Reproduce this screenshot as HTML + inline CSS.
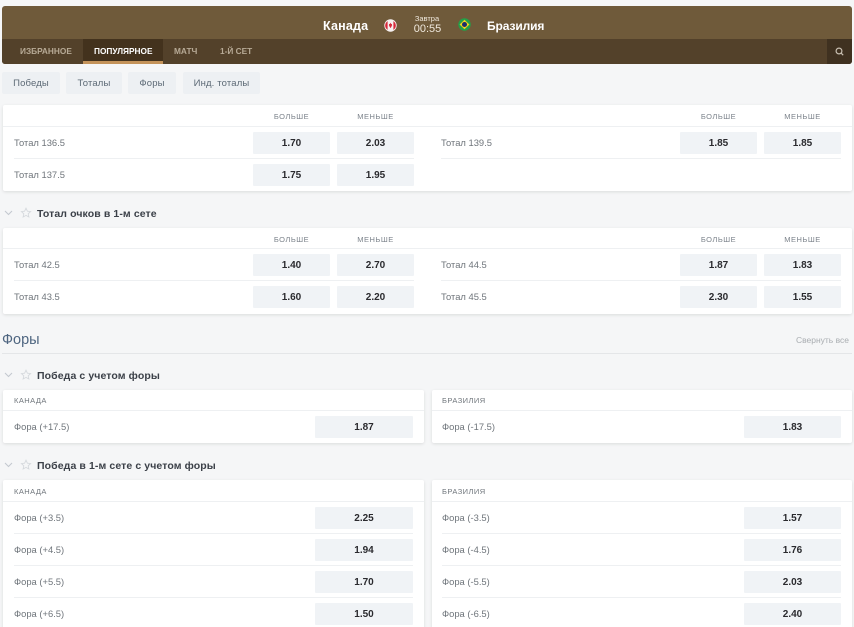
<!DOCTYPE html>
<html lang="ru"><head><meta charset="utf-8"><title>Канада — Бразилия</title>
<style>
html,body{margin:0;padding:0;background:#f5f6f7;width:854px;height:627px;overflow:hidden}
#p{width:854px;height:627px;overflow:hidden;position:relative;font-family:"Liberation Sans","DejaVu Sans",sans-serif;color:#333;background:#f5f6f7}
.a,.card,.b,.l,.h,.t,.line,.pill,.tab,.st,.sv{position:absolute}
.card{background:#fff;box-shadow:0 1px 3px rgba(0,0,0,.11);border-radius:2px}
.b{width:77px;height:22px;line-height:24px;background:#f0f3f6;text-align:center;font-size:10px;font-weight:700;color:#2a2a2e;border-radius:1px}
.w{width:98px}
.l{font-size:9.4px;color:#6f757b;line-height:14px;white-space:nowrap}
.h{font-size:7.5px;color:#7c838b;line-height:10px;margin-top:1px;letter-spacing:.5px;text-align:center;width:77px}
.hl{font-size:7.5px;color:#70767c;line-height:10px;margin-top:1px;letter-spacing:.45px;position:absolute}
.line{height:1px;background:#eef0f2}
.t{font-size:10.5px;font-weight:700;color:#3b4048;line-height:14px;margin-top:1px;letter-spacing:.1px;left:37px;white-space:nowrap}
.pill{top:72px;height:22px;line-height:23px;background:#edf0f3;color:#5d6a76;font-size:9.5px;text-align:center;border-radius:2px;letter-spacing:.15px}
.tab{top:39px;height:25px;line-height:25px;font-size:8.3px;font-weight:700;color:#b7aa96;white-space:nowrap}
.st{left:3px;width:31px;height:14px}
</style></head><body><div id="p">

<div class="a" style="left:2px;top:6px;width:850px;height:58px;border-radius:3px;overflow:hidden;background:#6f5a3a">
  <div class="a" style="left:0;top:33px;width:850px;height:25px;background:#53412a"></div>
  <div class="a" style="left:81px;top:33px;width:80px;height:25px;background:#43321d"></div>
  <div class="a" style="left:81px;top:55px;width:80px;height:3px;background:#c4935a"></div>
  <div class="a" style="left:825px;top:33px;width:25px;height:25px;background:#3f3120"></div>
</div>
<div class="a" style="left:323px;top:18px;font-size:12.5px;font-weight:700;color:#fff;line-height:16px;letter-spacing:.2px">Канада</div>
<svg class="a" style="left:384px;top:19px" width="13" height="13" viewBox="0 0 13 13"><circle cx="6.5" cy="6.5" r="6.2" fill="#f6f1f1"/><path d="M3.6 2.1A5.2 5.2 0 0 0 3.6 10.9ZM9.4 2.1A5.2 5.2 0 0 1 9.4 10.9Z" fill="#d5283a"/><path d="M6.5 3.6 7.2 5.1 8.1 4.8 7.8 6.6 8.3 6.9 7 7.9 7.1 8.8H5.9L6 7.9 4.7 6.9 5.2 6.6 4.9 4.8 5.8 5.1Z" fill="#d5283a"/></svg>
<div class="a" style="left:407px;top:14px;width:40px;text-align:center;font-size:7.5px;color:#f0e9dd;line-height:10px">Завтра</div>
<div class="a" style="left:407px;top:22px;width:41px;text-align:center;font-size:11px;color:#f0e9dd;line-height:14px">00:55</div>
<svg class="a" style="left:458px;top:18px" width="13" height="13" viewBox="0 0 13 13"><circle cx="6.5" cy="6.5" r="6.2" fill="#22a048"/><path d="M6.5 1.8 11.4 6.5 6.5 11.2 1.6 6.5Z" fill="#f2d21e"/><circle cx="6.5" cy="6.5" r="2.5" fill="#1d2f6b"/></svg>
<div class="a" style="left:487px;top:18px;font-size:12px;font-weight:700;color:#fff;line-height:16px;letter-spacing:-.1px">Бразилия</div>

<div class="tab" style="left:20px">ИЗБРАННОЕ</div>
<div class="tab" style="left:94px;color:#fff">ПОПУЛЯРНОЕ</div>
<div class="tab" style="left:174px">МАТЧ</div>
<div class="tab" style="left:220px">1-Й СЕТ</div>
<svg class="a" style="left:835px;top:47px" width="9" height="9" viewBox="0 0 9 9" fill="none" stroke="#c9c0b2" stroke-width="1.2"><circle cx="4" cy="4" r="2.9"/><path d="M6.1 6.1 8.2 8.2"/></svg>

<div class="pill" style="left:2px;width:58px">Победы</div>
<div class="pill" style="left:66px;width:56px">Тоталы</div>
<div class="pill" style="left:128px;width:48px">Форы</div>
<div class="pill" style="left:183px;width:77px">Инд. тоталы</div>

<!-- Card 1 -->
<div class="card" style="left:3px;top:105px;width:849px;height:86px"></div>
<div class="line" style="left:3px;top:126px;width:849px"></div>
<div class="h" style="left:253px;top:111px">БОЛЬШЕ</div><div class="h" style="left:337px;top:111px">МЕНЬШЕ</div>
<div class="h" style="left:680px;top:111px">БОЛЬШЕ</div><div class="h" style="left:764px;top:111px">МЕНЬШЕ</div>
<div class="l" style="left:14px;top:136px">Тотал 136.5</div>
<div class="b" style="left:253px;top:132px">1.70</div><div class="b" style="left:337px;top:132px">2.03</div>
<div class="l" style="left:441px;top:136px">Тотал 139.5</div>
<div class="b" style="left:680px;top:132px">1.85</div><div class="b" style="left:764px;top:132px">1.85</div>
<div class="line" style="left:14px;top:158px;width:400px"></div><div class="line" style="left:441px;top:158px;width:400px"></div>
<div class="l" style="left:14px;top:168px">Тотал 137.5</div>
<div class="b" style="left:253px;top:164px">1.75</div><div class="b" style="left:337px;top:164px">1.95</div>

<!-- Section 2 -->
<svg class="st" style="top:206px" viewBox="0 0 31 14" fill="none"><path d="M2 5 5.5 8.5 9 5" stroke="#c3c9cf" stroke-width="1.1"/><path d="M23 2.2 24.4 5.2 27.6 5.6 25.2 7.8 25.9 11 23 9.4 20.1 11 20.8 7.8 18.4 5.6 21.6 5.2Z" stroke="#d5d9dd" stroke-width=".9"/></svg>
<div class="t" style="top:206px">Тотал очков в 1-м сете</div>
<div class="card" style="left:3px;top:228px;width:849px;height:86px"></div>
<div class="line" style="left:3px;top:248px;width:849px"></div>
<div class="h" style="left:253px;top:234px">БОЛЬШЕ</div><div class="h" style="left:337px;top:234px">МЕНЬШЕ</div>
<div class="h" style="left:680px;top:234px">БОЛЬШЕ</div><div class="h" style="left:764px;top:234px">МЕНЬШЕ</div>
<div class="l" style="left:14px;top:258px">Тотал 42.5</div>
<div class="b" style="left:253px;top:254px">1.40</div><div class="b" style="left:337px;top:254px">2.70</div>
<div class="l" style="left:441px;top:258px">Тотал 44.5</div>
<div class="b" style="left:680px;top:254px">1.87</div><div class="b" style="left:764px;top:254px">1.83</div>
<div class="line" style="left:14px;top:280px;width:400px"></div><div class="line" style="left:441px;top:280px;width:400px"></div>
<div class="l" style="left:14px;top:290px">Тотал 43.5</div>
<div class="b" style="left:253px;top:286px">1.60</div><div class="b" style="left:337px;top:286px">2.20</div>
<div class="l" style="left:441px;top:290px">Тотал 45.5</div>
<div class="b" style="left:680px;top:286px">2.30</div><div class="b" style="left:764px;top:286px">1.55</div>

<!-- Форы -->
<div class="a" style="left:2px;top:331px;font-size:14.5px;line-height:18px;color:#4e6580">Форы</div>
<div class="a" style="right:5px;top:335px;font-size:8.5px;line-height:11px;color:#a9adb1">Свернуть все</div>
<div class="line" style="left:2px;top:353px;width:850px;background:#e4e6e8"></div>

<svg class="st" style="top:368px" viewBox="0 0 31 14" fill="none"><path d="M2 5 5.5 8.5 9 5" stroke="#c3c9cf" stroke-width="1.1"/><path d="M23 2.2 24.4 5.2 27.6 5.6 25.2 7.8 25.9 11 23 9.4 20.1 11 20.8 7.8 18.4 5.6 21.6 5.2Z" stroke="#d5d9dd" stroke-width=".9"/></svg>
<div class="t" style="top:368px">Победа с учетом форы</div>
<div class="card" style="left:3px;top:390px;width:421px;height:53px"></div>
<div class="card" style="left:432px;top:390px;width:420px;height:53px"></div>
<div class="line" style="left:3px;top:410px;width:421px"></div><div class="line" style="left:432px;top:410px;width:420px"></div>
<div class="hl" style="left:14px;top:395px">КАНАДА</div><div class="hl" style="left:442px;top:395px">БРАЗИЛИЯ</div>
<div class="l" style="left:14px;top:420px">Фора (+17.5)</div><div class="b w" style="left:315px;top:416px">1.87</div>
<div class="l" style="left:442px;top:420px">Фора (-17.5)</div><div class="b w" style="left:744px;top:416px;width:97px">1.83</div>

<svg class="st" style="top:458px" viewBox="0 0 31 14" fill="none"><path d="M2 5 5.5 8.5 9 5" stroke="#c3c9cf" stroke-width="1.1"/><path d="M23 2.2 24.4 5.2 27.6 5.6 25.2 7.8 25.9 11 23 9.4 20.1 11 20.8 7.8 18.4 5.6 21.6 5.2Z" stroke="#d5d9dd" stroke-width=".9"/></svg>
<div class="t" style="top:458px">Победа в 1-м сете с учетом форы</div>
<div class="card" style="left:3px;top:480px;width:421px;height:160px"></div>
<div class="card" style="left:432px;top:480px;width:420px;height:160px"></div>
<div class="line" style="left:3px;top:501px;width:421px"></div><div class="line" style="left:432px;top:501px;width:420px"></div>
<div class="hl" style="left:14px;top:486px">КАНАДА</div><div class="hl" style="left:442px;top:486px">БРАЗИЛИЯ</div>

<div class="l" style="left:14px;top:511px">Фора (+3.5)</div><div class="b w" style="left:315px;top:507px">2.25</div>
<div class="l" style="left:442px;top:511px">Фора (-3.5)</div><div class="b w" style="left:744px;top:507px;width:97px">1.57</div>
<div class="line" style="left:14px;top:533px;width:399px"></div><div class="line" style="left:442px;top:533px;width:399px"></div>
<div class="l" style="left:14px;top:543px">Фора (+4.5)</div><div class="b w" style="left:315px;top:539px">1.94</div>
<div class="l" style="left:442px;top:543px">Фора (-4.5)</div><div class="b w" style="left:744px;top:539px;width:97px">1.76</div>
<div class="line" style="left:14px;top:565px;width:399px"></div><div class="line" style="left:442px;top:565px;width:399px"></div>
<div class="l" style="left:14px;top:575px">Фора (+5.5)</div><div class="b w" style="left:315px;top:571px">1.70</div>
<div class="l" style="left:442px;top:575px">Фора (-5.5)</div><div class="b w" style="left:744px;top:571px;width:97px">2.03</div>
<div class="line" style="left:14px;top:597px;width:399px"></div><div class="line" style="left:442px;top:597px;width:399px"></div>
<div class="l" style="left:14px;top:607px">Фора (+6.5)</div><div class="b w" style="left:315px;top:603px">1.50</div>
<div class="l" style="left:442px;top:607px">Фора (-6.5)</div><div class="b w" style="left:744px;top:603px;width:97px">2.40</div>

</div></body></html>
